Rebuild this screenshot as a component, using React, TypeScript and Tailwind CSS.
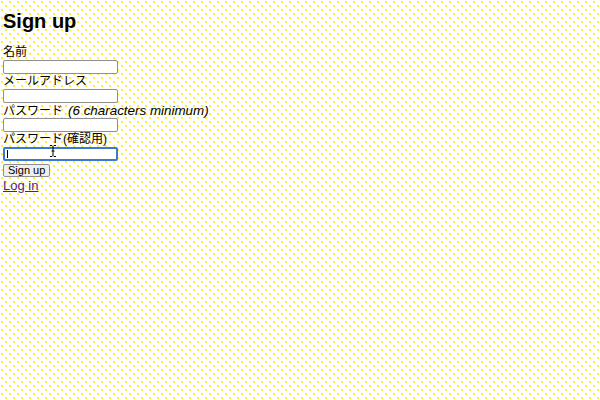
import React from 'react';

const fields = [
  { id: 'name', label: '名前', type: 'text' },
  { id: 'email', label: 'メールアドレス', type: 'email' },
  { id: 'password', label: 'パスワード', hint: '(6 characters minimum)', type: 'password' },
  { id: 'password_confirmation', label: 'パスワード(確認用)', type: 'password', focused: true },
];

export default function App() {
  return (
    <div
      className="w-[600px] h-[400px] overflow-hidden bg-white bg-[radial-gradient(circle_at_2px_2px,rgb(255,238,60)_0.8px,transparent_1px),radial-gradient(circle_at_6px_6px,rgb(255,238,60)_0.8px,transparent_1px)] bg-[length:8px_8px] text-black"
      style={{ fontFamily: '"Liberation Sans", "Noto Sans CJK JP", sans-serif' }}
    >
      <div className="pl-[3px] pt-[10px] flex flex-col">
        <h2 className="text-[20px] font-bold leading-[22px] mb-[13px]">Sign up</h2>

        <form className="flex flex-col" onSubmit={(e) => e.preventDefault()}>
          {fields.map((f) => (
            <div key={f.id} className="flex flex-col">
              <label htmlFor={f.id} className="block text-[12px] leading-[15px] h-[15px] whitespace-nowrap">
                {f.label}
                {f.hint && <em className="ml-[5px] text-[13.4px]">{f.hint}</em>}
              </label>
              <div className="relative w-[115px] h-[14px]">
                <input
                  id={f.id}
                  type={f.type}
                  className={
                    f.focused
                      ? 'block w-full h-full bg-white border-2 border-[#3b78d8] rounded-[2px] outline-none'
                      : 'block w-full h-full bg-white border border-[#8f8f8f] rounded-[2px] outline-none'
                  }
                />
                {f.focused && (
                  <>
                    {/* caret */}
                    <div className="absolute left-[4px] top-[3px] w-px h-[8px] bg-black" />
                    {/* mouse I-beam */}
                    <svg className="absolute left-[46px] top-[-2px]" width="8" height="12" viewBox="0 0 8 12">
                      <path d="M1 0.5h2l1 1 1-1h2M4 1.5v9M1 11.5h2l1-1 1 1h2M2.5 6h3" stroke="#000" strokeWidth="1" fill="none" />
                    </svg>
                  </>
                )}
              </div>
            </div>
          ))}

          <div className="mt-[3px] flex">
            <button
              type="submit"
              className="block h-[13px] px-[4px] text-[11px] leading-[11px] bg-[#efefef] border border-[#8f8f8f] rounded-[2px]"
            >
              Sign up
            </button>
          </div>
        </form>

        <a href="#" className="text-[13px] leading-[15px] text-[#551a8b] underline self-start mt-[1px]">
          Log in
        </a>
      </div>
    </div>
  );
}
